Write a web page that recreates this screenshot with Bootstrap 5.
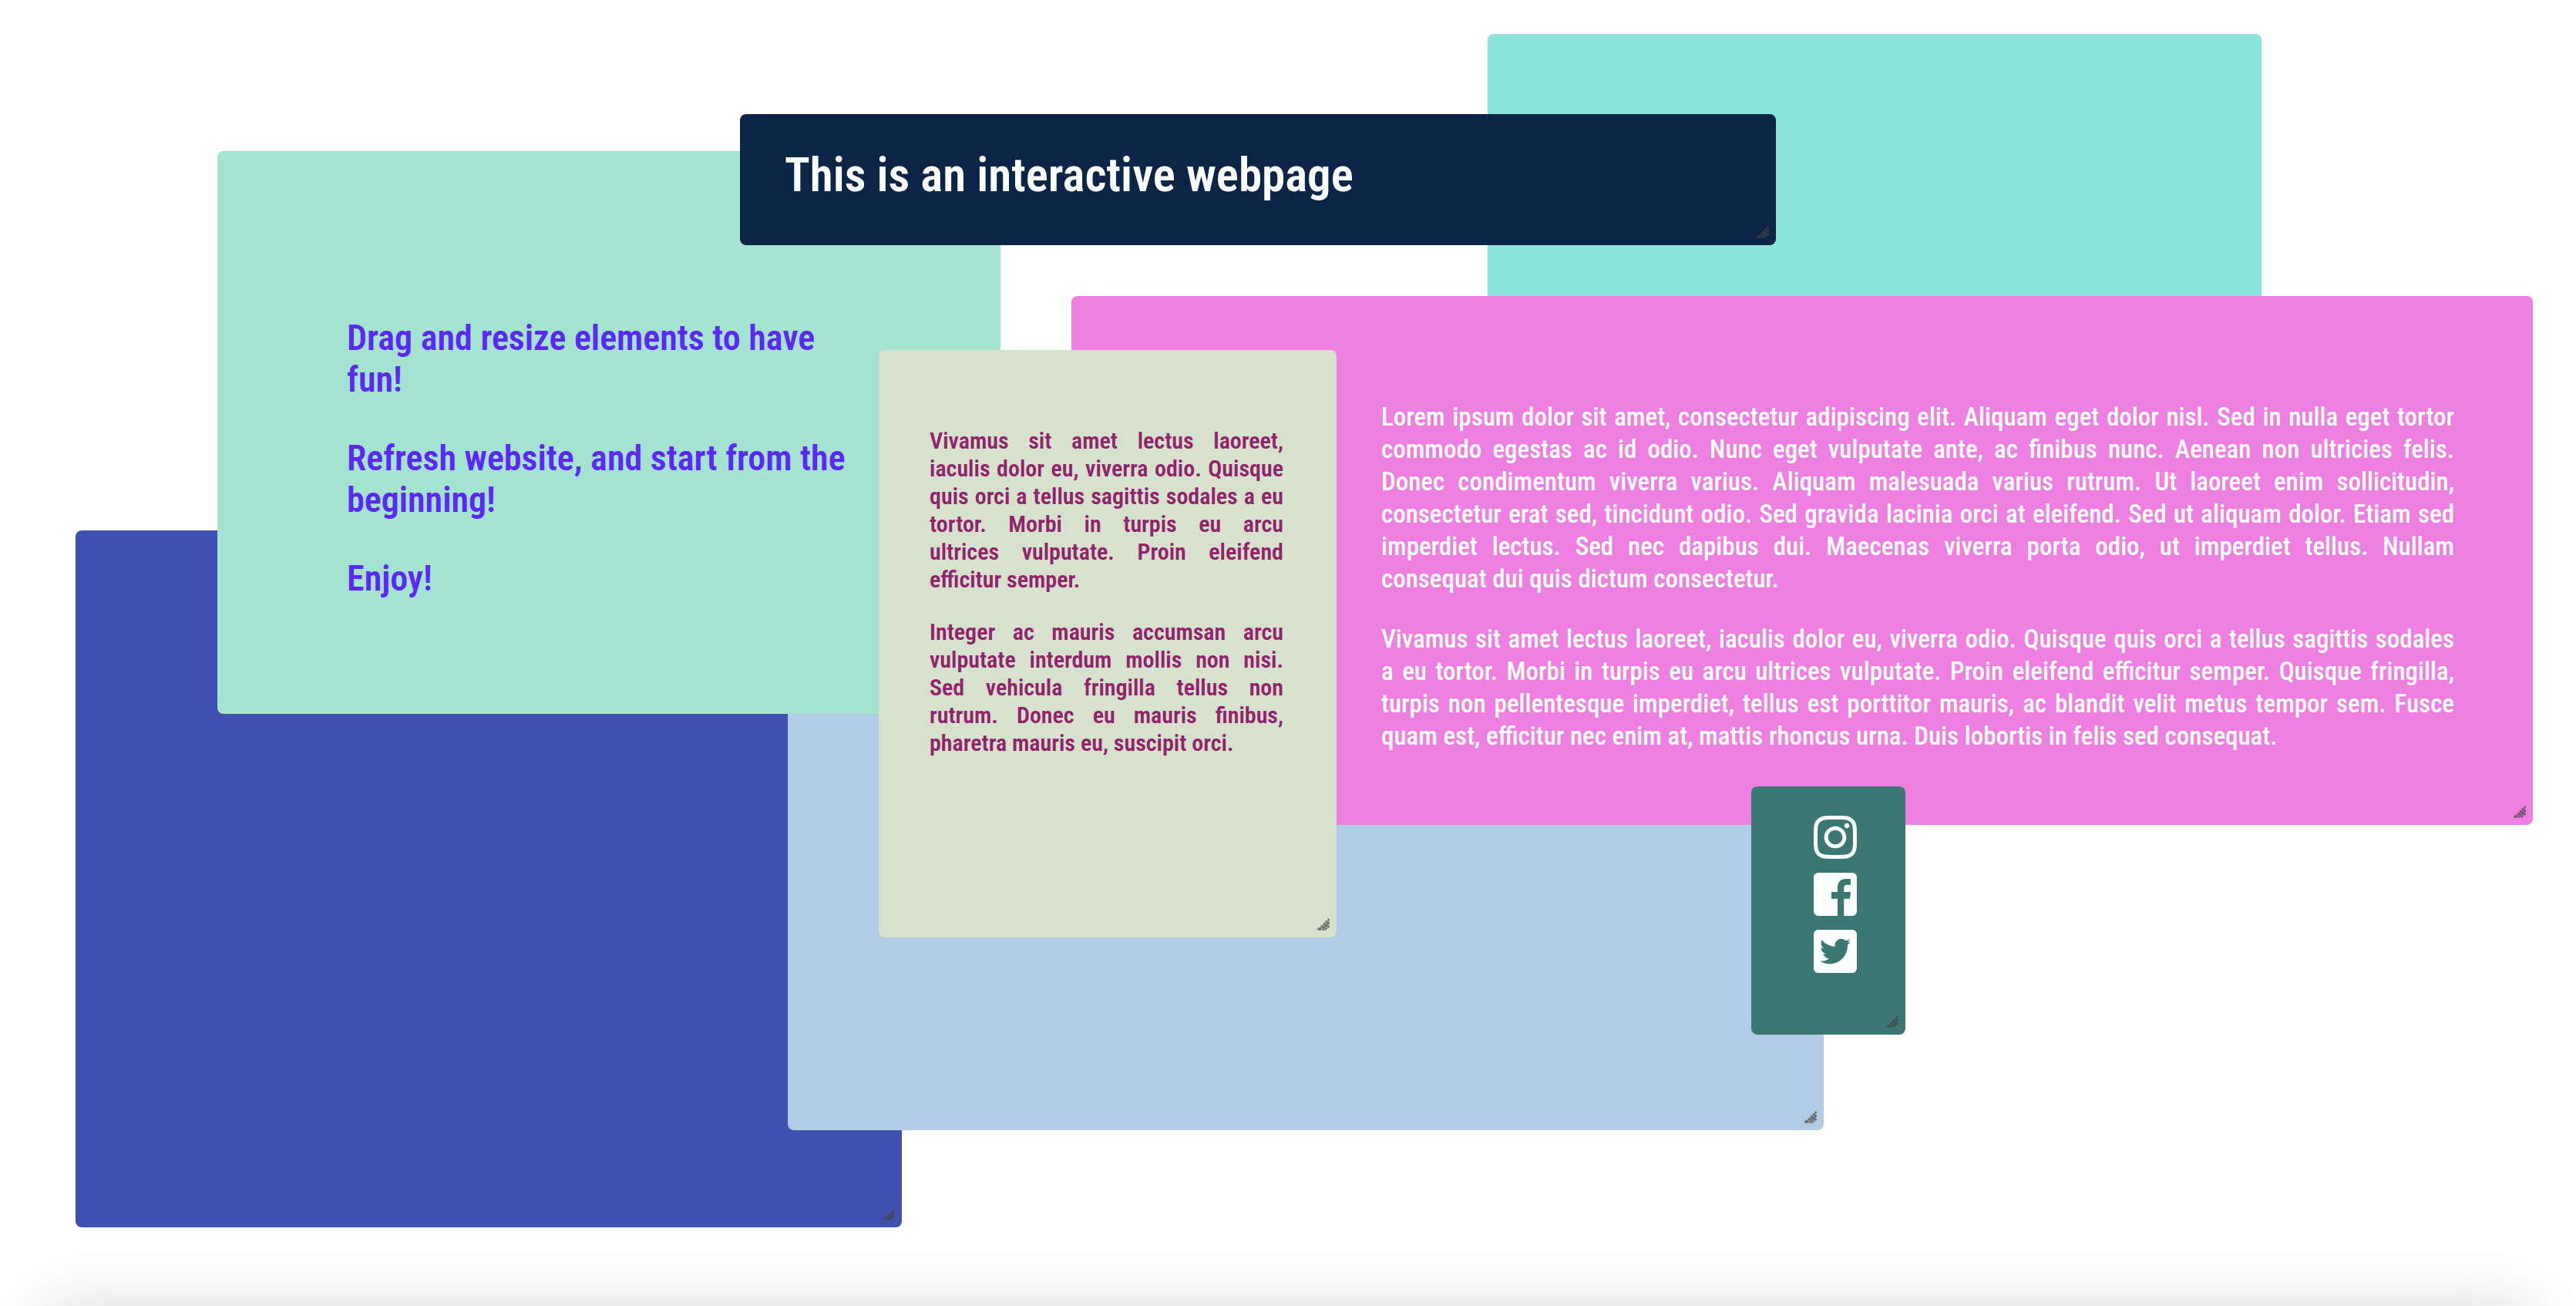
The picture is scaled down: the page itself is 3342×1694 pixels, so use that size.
<!DOCTYPE html>
<html lang="en">
<head>
<meta charset="utf-8">
<meta name="viewport" content="width=device-width, initial-scale=1">
<title>Interactive webpage</title>
<link href="https://cdn.jsdelivr.net/npm/bootstrap@5.3.0/dist/css/bootstrap.min.css" rel="stylesheet">
<style>
body { background: #fff; font-family: "Roboto Condensed", Roboto, "Liberation Sans", sans-serif; }
.desk { min-height: 100vh; }
.pane { position: absolute; border-radius: 8px; }
.pane-blue  { left: 98px;   top: 688px;  width: 1072px; height: 904px; background: #4050ae; }
.pane-sky   { left: 1022px; top: 800px;  width: 1344px; height: 666px; background: #b2cce6; }
.pane-aqua  { left: 1930px; top: 44px;   width: 1004px; height: 500px; background: #8be3d9; }
.pane-mint  { left: 282px;  top: 196px;  width: 1016px; height: 730px; background: #a3e3d0; padding: 215px 168px 0; }
.pane-pink  { left: 1390px; top: 384px;  width: 1896px; height: 686px; background: #ed80e1; padding: 136px 102px 0 402px; }
.pane-sage  { left: 1140px; top: 454px;  width: 594px;  height: 762px; background: #d6e1ce; padding: 100px 69px 0 66px; }
.pane-navy  { left: 960px;  top: 148px;  width: 1344px; height: 170px; background: #0c2445; padding: 43px 58px 0; }
.pane-teal  { left: 2272px; top: 1020px; width: 200px;  height: 322px; background: #3c7774; padding: 38px 63px 0 81px; }
.headline { font-size: 61px; line-height: 72px; font-weight: 600; color: #fcffff; }
.hint { font-size: 46px; line-height: 54px; font-weight: 600; color: #5b28f6; margin-bottom: 48px; }
.story { font-size: 33px; line-height: 42px; font-weight: 500; color: #fff; margin-bottom: 36px; }
.note { font-size: 30px; line-height: 36px; font-weight: 600; color: #91236b; margin-bottom: 32px; }
.line { display: block; white-space: nowrap; text-align: justify; text-align-last: justify; }
.line:last-child, .hint .line { text-align-last: left; }
.social-list { gap: 18px; }
.social { width: 56px; height: 56px; fill: #fcffff; display: block; }
.grip { position: absolute; right: 9px; bottom: 9px; width: 16px; height: 16px; fill: #444; fill-opacity: .6; }
.floor { position: fixed; top: 100%; left: 56px; right: 56px; height: 200px; box-shadow: 0 0 84px rgba(0, 0, 0, .15); }
</style>
</head>
<body>
<svg class="d-none" aria-hidden="true">
  <symbol id="grip" viewBox="0 0 17 16">
    <path fill-opacity=".4" d="M1 16 16 1v10l-4 5z"/>
    <path d="M14 0h3v3h-3zM11 3h3v3h-3zM8 6h3v3H8zM5 9h3v3H5zM2 12h3v4H0v-2zM14 5h3v3h-3zM11 8h3v3h-3zM8 11h3v2H8zM14 10h3v2l-2 1zM7 14h3v2H7zM12 13h2l-2 3h-1z"/>
  </symbol>
</svg>
<main class="desk position-relative overflow-hidden">
  <section class="pane pane-blue"><svg class="grip"><use href="#grip"/></svg></section>
  <section class="pane pane-sky"><svg class="grip"><use href="#grip"/></svg></section>
  <section class="pane pane-aqua"></section>
  <section class="pane pane-mint">
    <h2 class="hint"><span class="line">Drag and resize elements to have</span> <span class="line">fun!</span></h2>
    <h2 class="hint"><span class="line">Refresh website, and start from the</span> <span class="line">beginning!</span></h2>
    <h2 class="hint mb-0">Enjoy!</h2>
  </section>
  <section class="pane pane-pink">
    <p class="story">
      <span class="line">Lorem ipsum dolor sit amet, consectetur adipiscing elit. Aliquam eget dolor nisl. Sed in nulla eget tortor</span>
      <span class="line">commodo egestas ac id odio. Nunc eget vulputate ante, ac finibus nunc. Aenean non ultricies felis.</span>
      <span class="line">Donec condimentum viverra varius. Aliquam malesuada varius rutrum. Ut laoreet enim sollicitudin,</span>
      <span class="line">consectetur erat sed, tincidunt odio. Sed gravida lacinia orci at eleifend. Sed ut aliquam dolor. Etiam sed</span>
      <span class="line">imperdiet lectus. Sed nec dapibus dui. Maecenas viverra porta odio, ut imperdiet tellus. Nullam</span>
      <span class="line">consequat dui quis dictum consectetur.</span>
    </p>
    <p class="story mb-0">
      <span class="line">Vivamus sit amet lectus laoreet, iaculis dolor eu, viverra odio. Quisque quis orci a tellus sagittis sodales</span>
      <span class="line">a eu tortor. Morbi in turpis eu arcu ultrices vulputate. Proin eleifend efficitur semper. Quisque fringilla,</span>
      <span class="line">turpis non pellentesque imperdiet, tellus est porttitor mauris, ac blandit velit metus tempor sem. Fusce</span>
      <span class="line">quam est, efficitur nec enim at, mattis rhoncus urna. Duis lobortis in felis sed consequat.</span>
    </p>
    <svg class="grip"><use href="#grip"/></svg>
  </section>
  <section class="pane pane-sage">
    <p class="note">
      <span class="line">Vivamus sit amet lectus laoreet,</span>
      <span class="line">iaculis dolor eu, viverra odio. Quisque</span>
      <span class="line">quis orci a tellus sagittis sodales a eu</span>
      <span class="line">tortor. Morbi in turpis eu arcu</span>
      <span class="line">ultrices vulputate. Proin eleifend</span>
      <span class="line">efficitur semper.</span>
    </p>
    <p class="note mb-0">
      <span class="line">Integer ac mauris accumsan arcu</span>
      <span class="line">vulputate interdum mollis non nisi.</span>
      <span class="line">Sed vehicula fringilla tellus non</span>
      <span class="line">rutrum. Donec eu mauris finibus,</span>
      <span class="line">pharetra mauris eu, suscipit orci.</span>
    </p>
    <svg class="grip"><use href="#grip"/></svg>
  </section>
  <header class="pane pane-navy">
    <h1 class="headline mb-0">This is an interactive webpage</h1>
    <svg class="grip"><use href="#grip"/></svg>
  </header>
  <nav class="pane pane-teal" aria-label="Social links">
    <div class="social-list d-flex flex-column">
      <a href="#" aria-label="Instagram"><svg class="social" viewBox="0 32 448 448"><path d="M224.1 141c-63.6 0-114.9 51.3-114.9 114.9s51.3 114.9 114.9 114.9S339 319.5 339 255.9 287.7 141 224.1 141zm0 189.6c-41.1 0-74.7-33.5-74.7-74.7s33.5-74.7 74.7-74.7 74.7 33.5 74.7 74.7-33.6 74.7-74.7 74.7zm146.4-194.3c0 14.9-12 26.8-26.8 26.8-14.9 0-26.8-12-26.8-26.8s12-26.8 26.8-26.8 26.8 12 26.8 26.8zm76.1 27.2c-1.7-35.9-9.9-67.7-36.2-93.9-26.2-26.2-58-34.4-93.9-36.2-37-2.1-147.9-2.1-184.9 0-35.8 1.7-67.6 9.9-93.9 36.1s-34.4 58-36.2 93.9c-2.1 37-2.1 147.9 0 184.9 1.7 35.9 9.9 67.7 36.2 93.9s58 34.4 93.9 36.2c37 2.1 147.9 2.1 184.9 0 35.9-1.7 67.7-9.9 93.9-36.2 26.2-26.2 34.4-58 36.2-93.9 2.1-37 2.1-147.8 0-184.8zM398.8 388c-7.8 19.6-22.9 34.7-42.6 42.6-29.5 11.7-99.5 9-132.1 9s-102.7 2.6-132.1-9c-19.6-7.8-34.7-22.9-42.6-42.6-11.7-29.5-9-99.5-9-132.1s-2.6-102.7 9-132.1c7.8-19.6 22.9-34.7 42.6-42.6 29.5-11.7 99.5-9 132.1-9s102.7-2.6 132.1 9c19.6 7.8 34.7 22.9 42.6 42.6 11.7 29.5 9 99.5 9 132.1s2.7 102.7-9 132.1z"/></svg></a>
      <a href="#" aria-label="Facebook"><svg class="social" viewBox="0 32 448 448"><path d="M400 32H48A48 48 0 0 0 0 80v352a48 48 0 0 0 48 48h200V302h-64v-70h64v-44c0-62 34-92 88-92h48v62h-36c-27 0-34 14-34 32v42h70l-8 70h-62v178h86a48 48 0 0 0 48-48V80a48 48 0 0 0-48-48z"/></svg></a>
      <a href="#" aria-label="Twitter"><svg class="social" viewBox="0 32 448 448"><path d="M400 32H48C21.5 32 0 53.500 0 80v352c0 26.500 21.500 48 48 48h352c26.500 0 48-21.500 48-48V80c0-26.500-21.500-48-48-48zm-48.900 158.800c.2 2.800.2 5.700.2 8.500 0 86.700-66 186.600-186.600 186.600-37.200 0-71.700-10.800-100.700-29.400 5.300.6 10.400.8 15.800.8 30.700 0 58.900-10.400 81.400-28-28.800-.6-53-19.500-61.300-45.500 10.100 1.500 19.200 1.500 29.600-1.200-30-6.100-52.500-32.500-52.500-64.400v-.8c8.700 4.900 18.900 7.900 29.600 8.300a65.447 65.447 0 0 1-29.200-54.600c0-12.200 3.200-23.400 8.900-33.100 32.300 39.800 80.800 65.800 135.200 68.600-9.300-44.500 24-80.600 64-80.600 18.900 0 35.900 7.900 47.900 20.700 14.800-2.800 29-8.300 41.600-15.800-4.900 15.200-15.200 28-28.800 36.100 13.200-1.400 26-5.100 37.800-10.200-8.900 13.100-20.100 24.700-32.900 34z"/></svg></a>
    </div>
    <svg class="grip"><use href="#grip"/></svg>
  </nav>
</main>
<div class="floor" aria-hidden="true"></div>
<script src="https://cdn.jsdelivr.net/npm/bootstrap@5.3.0/dist/js/bootstrap.bundle.min.js"></script>
</body>
</html>
